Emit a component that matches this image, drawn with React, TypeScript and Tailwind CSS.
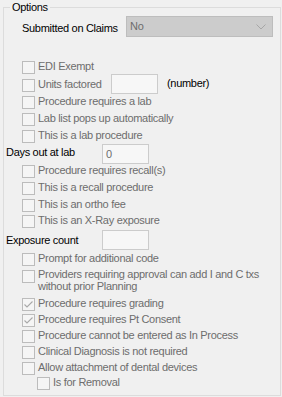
import React from "react";

const Box = ({ checked }: { checked?: boolean }) => (
  <span className="w-[13px] h-[13px] border border-[#bcbcbc] bg-[#f5f5f5] shrink-0 flex items-center justify-center">
    {checked && (
      <svg width="11" height="11" viewBox="0 0 11 11">
        <path d="M1.5 5.5 L4 8 L9.5 2.5" fill="none" stroke="#a8a8a8" strokeWidth="1.1" />
      </svg>
    )}
  </span>
);

const Row = ({
  label,
  h,
  checked,
  indent = 18,
  mt = 0,
  children,
}: {
  label: string;
  h: number;
  checked?: boolean;
  indent?: number;
  mt?: number;
  children?: React.ReactNode;
}) => (
  <div className="flex items-start" style={{ height: h, paddingLeft: indent, marginTop: mt }}>
    <span className="mt-[1px]">
      <Box checked={checked} />
    </span>
    <span className="ml-[3px] text-[#6d6d6d] leading-[13px] whitespace-nowrap">{label}</span>
    {children}
  </div>
);

const TextBox = ({ value }: { value?: string }) => (
  <div className="w-[47px] h-[20px] border border-[#cccccc] bg-[#f7f7f7] text-[#6d6d6d] leading-[18px] pl-[3px] shrink-0">
    {value}
  </div>
);

export default function App() {
  return (
    <div
      className="w-[282px] h-[397px] bg-[#f0f0f0] text-[11px] tracking-[-0.3px] text-black overflow-hidden pt-[7px] pl-[3px]"
      style={{ fontFamily: '"Liberation Sans", Arial, sans-serif' }}
    >
      <div className="relative w-[278px] h-[389px] border border-[#dcdcdc] pt-[8px]">
        <span className="absolute left-[6px] top-[-7px] px-[2px] bg-[#f0f0f0] leading-[13px] text-black">
          Options
        </span>

        {/* Submitted on Claims */}
        <div className="flex items-start h-[21px] pl-[18px]">
          <span className="w-[104px] mt-[6px] leading-[13px] whitespace-nowrap">Submitted on Claims</span>
          <div className="w-[147px] h-[21px] border border-[#bdbdbd] bg-[#cccccc] flex items-center justify-between pl-[3px] pr-[6px] text-[#6d6d6d]">
            <span className="leading-[13px]">No</span>
            <svg width="10" height="6" viewBox="0 0 10 6">
              <path d="M0.5 0.5 L5 5 L9.5 0.5" fill="none" stroke="#a6a6a6" strokeWidth="1" />
            </svg>
          </div>
        </div>

        <Row label="EDI Exempt" h={18} mt={23} />
        <div className="flex items-start h-[17px] pl-[18px]">
          <span className="mt-[1px]">
            <Box />
          </span>
          <span className="ml-[3px] w-[73px] text-[#6d6d6d] leading-[13px] whitespace-nowrap">Units factored</span>
          <div className="-mt-[4px]">
            <TextBox />
          </div>
          <span className="ml-[9px] -mt-[1px] leading-[13px] text-black">(number)</span>
        </div>
        <Row label="Procedure requires a lab" h={17} />
        <Row label="Lab list pops up automatically" h={17} />
        <Row label="This is a lab procedure" h={15} />

        <div className="flex items-start h-[20px] pl-[2px]">
          <span className="w-[96px] mt-[2px] leading-[13px] whitespace-nowrap">Days out at lab</span>
          <TextBox value="0" />
        </div>

        <Row label="Procedure requires recall(s)" h={17} />
        <Row label="This is a recall procedure" h={17} />
        <Row label="This is an ortho fee" h={16} />
        <Row label="This is an X-Ray exposure" h={16} />

        <div className="flex items-start h-[22px] pl-[2px]">
          <span className="w-[96px] mt-[4px] leading-[13px] whitespace-nowrap">Exposure count</span>
          <TextBox />
        </div>

        <Row label="Prompt for additional code" h={16} />

        <div className="flex items-start h-[29px] pl-[18px]">
          <span className="mt-[2px]">
            <Box />
          </span>
          <span className="ml-[3px] text-[#6d6d6d] leading-[12px]">
            Providers requiring approval can add I and C txs
            <br />
            without prior Planning
          </span>
        </div>

        <Row label="Procedure requires grading" h={16} checked />
        <Row label="Procedure requires Pt Consent" h={16} checked />
        <Row label="Procedure cannot be entered as In Process" h={16} />
        <Row label="Clinical Diagnosis is not required" h={16} />
        <Row label="Allow attachment of dental devices" h={15} />
        <Row label="Is for Removal" h={17} indent={33} />
      </div>
    </div>
  );
}
